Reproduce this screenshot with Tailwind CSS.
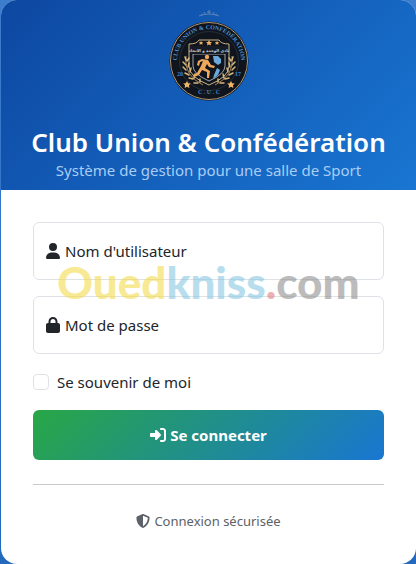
<!DOCTYPE html>
<html lang="fr">
<head>
    <meta charset="UTF-8">
    <meta name="viewport" content="width=device-width, initial-scale=1.0">
    <title>Club Union &amp; Confédération</title>
    <script src="https://cdn.jsdelivr.net/npm/@tailwindcss/browser@4"></script>
</head>
<body class="min-h-screen bg-linear-to-b from-[#3d7dce] to-[#2369bd] pl-px font-['Noto_Sans',sans-serif] text-[#212529]">
    <main class="relative min-h-screen overflow-hidden rounded-2xl bg-white">
        <!-- Header -->
        <header class="flex flex-col items-center bg-[linear-gradient(135deg,#0d47a1,#1976d2)] px-4 pt-2 pb-2.5 text-center text-white">
            <svg class="h-24 w-24" viewBox="0 0 96 96" role="img" aria-label="Logo du club">
                <defs>
                    <path id="arc-top" d="M17 61A32 32 0 1 1 79 61"/>
                </defs>
                <path d="M38 8q10-4 20 0M40 6l2 1M56 6l-2 1M48 2v4M46 4h4M43 4l1 2M53 4l-1 2" fill="none" stroke="#5d83b5" stroke-width="1"/>
                <circle cx="48" cy="53" r="39.500" fill="#10151d"/>
                <circle cx="48" cy="53" r="38.500" fill="none" stroke="#b29670" stroke-width="1"/>
                <circle cx="48" cy="53" r="29.500" fill="none" stroke="#3a4450" stroke-width="0.500"/>
                <text font-family="Liberation Serif, serif" font-size="6" font-weight="700" fill="#4a90d4" text-anchor="middle">
                    <textPath href="#arc-top" startOffset="50%">CLUB UNION &amp; CONFÉDÉRATION</textPath>
                </text>
                <g font-family="Liberation Serif, serif" font-size="6" font-weight="700" fill="#3f86cc" text-anchor="middle">
                    <text x="19" y="68">20</text>
                    <text x="77" y="68">17</text>
                    <text x="48" y="86">C . U . C</text>
                </g>
                <!-- Shield -->
                <path d="M28 36q8 0 10-4h20q2 4 10 4v22q0 11-20 19-20-8-20-19z" fill="#10151d" stroke="#c9b38a" stroke-width="1"/>
                <path d="M32 46h32v12q0 8-16 15-16-7-16-15z" fill="none" stroke="#c3cad2" stroke-width="0.800"/>
                <path d="M29 38h38v8H29z" fill="#161b24"/>
                <text x="48" y="44" font-family="DejaVu Sans, sans-serif" font-size="4" font-weight="700" fill="#c8d3de" text-anchor="middle">نادي الوحدة و الاتحاد</text>
                <g fill="#f0b464">
                    <path d="M48 32l1 2h2l-1.500 1.500.5 2-2-1-2 1 .5-2L45 34h2zM40 33l.7 1.300h1.500l-1 1 .3 1.500-1.500-.8-1.500.8.3-1.500-1-1h1.500zM56 33l.7 1.300h1.500l-1 1 .3 1.500-1.500-.8-1.500.8.3-1.500-1-1h1.500z"/>
                    <path d="M26 73l1.200 2.200 2.600.3-1.900 1.800.5 2.600-2.400-1.200-2.400 1.200.5-2.600-1.900-1.800 2.600-.3zM70 73l1.200 2.200 2.600.3-1.900 1.800.5 2.600-2.400-1.200-2.400 1.200.5-2.600-1.900-1.800 2.600-.3z"/>
                </g>
                <!-- Laurels -->
                <g fill="none" stroke="#d9b67a">
                    <path d="M25 48q-3 19 17 29M71 48q3 19-17 29" stroke-width="0.700"/>
                    <path d="M24 49l1 3M22 54l3 3M22 59l3 3M24 65l4 2M28 70l4 1M33 75l4 0M28 50l-2 3M28 55l-1 4M30 60l-1 4M34 66l-1 4M39 71l0 3M72 49l-1 3M74 54l-3 3M74 59l-3 3M72 65l-4 2M68 70l-4 1M63 75l-4 0M68 50l2 3M68 55l1 4M66 60l1 4M62 66l1 4M57 71l0 3" stroke-width="1.500" stroke-linecap="round"/>
                </g>
                <!-- Runner -->
                <g fill="#f0a95c">
                    <circle cx="46" cy="49" r="2.200"/>
                    <path d="M41 51l6 1 3 5 4 1-1 2-5-1-2-3-2 4 5 3-1 7-2 0 0-6-5-2-3 5-5 2-1-2 4-2 4-7 2-5-3 1-1 4-2-1 1-4z"/>
                </g>
                <path d="M52 48l5 0 3 3 0 4-3 2-4-3zM56 60l3 2-2 5-5 4 1-4z" fill="#6ba8dc"/>
            </svg>
            <h1 class="mt-5 text-[26px] leading-9 font-semibold whitespace-nowrap">Club Union &amp; Confédération</h1>
            <p class="text-[15px] leading-5 text-[#a9cdf4]">Système de gestion pour une salle de Sport</p>
        </header>

        <!-- Login form -->
        <form class="flex flex-col px-8 pt-8">
            <div class="relative">
                <input id="username" type="text" autocomplete="username" class="block h-[58px] w-full rounded-md border border-[#dee2e6] bg-white px-3 focus:outline-none focus:ring-2 focus:ring-blue-500">
                <label for="username" class="pointer-events-none absolute inset-y-0 left-3 flex items-center gap-1 text-[15px]">
                    <svg class="h-4 w-4" viewBox="0 0 448 512" fill="currentColor" aria-hidden="true"><path d="M224 256A128 128 0 1 0 224 0a128 128 0 1 0 0 256zm-45.700 48C79.800 304 0 383.800 0 482.300C0 498.700 13.300 512 29.700 512H418.300c16.400 0 29.700-13.300 29.700-29.700C448 383.800 368.200 304 269.700 304H178.300z"/></svg>
                    Nom d'utilisateur
                </label>
            </div>
            <div class="relative mt-4">
                <input id="password" type="password" autocomplete="current-password" class="block h-[58px] w-full rounded-md border border-[#dee2e6] bg-white px-3 focus:outline-none focus:ring-2 focus:ring-blue-500">
                <label for="password" class="pointer-events-none absolute inset-y-0 left-3 flex items-center gap-1 text-[15px]">
                    <svg class="h-4 w-4" viewBox="0 0 448 512" fill="currentColor" aria-hidden="true"><path d="M144 144v48H304V144c0-44.200-35.800-80-80-80s-80 35.800-80 80zM80 192V144C80 64.500 144.500 0 224 0s144 64.500 144 144v48h16c35.300 0 64 28.700 64 64V448c0 35.300-28.700 64-64 64H64c-35.300 0-64-28.700-64-64V256c0-35.300 28.700-64 64-64H80z"/></svg>
                    Mot de passe
                </label>
            </div>
            <div class="mt-4 flex items-center gap-2">
                <input id="remember" type="checkbox" class="h-4 w-4 appearance-none rounded border border-[#dee2e6] bg-white checked:bg-[#1976d2]">
                <label for="remember" class="text-[15px] leading-6">Se souvenir de moi</label>
            </div>
            <button type="submit" class="mt-4 flex h-[50px] items-center justify-center gap-1 rounded-md bg-[linear-gradient(135deg,#28a745,#1976d2)] text-[15px] font-bold text-white">
                <svg class="h-4 w-4" viewBox="0 0 512 512" fill="currentColor" aria-hidden="true"><path d="M217.900 105.900L340.700 228.700c7.200 7.200 11.300 17.100 11.300 27.300s-4.100 20.100-11.300 27.300L217.900 406.100c-6.400 6.400-15 9.900-24 9.900c-18.700 0-33.900-15.200-33.900-33.900l0-62.100L32 320c-17.700 0-32-14.300-32-32l0-64c0-17.700 14.300-32 32-32l128 0 0-62.100c0-18.700 15.200-33.900 33.900-33.900c9 0 17.600 3.600 24 9.900zM352 416l64 0c17.700 0 32-14.300 32-32l0-256c0-17.700-14.300-32-32-32l-64 0c-17.700 0-32-14.300-32-32s14.300-32 32-32l64 0c53 0 96 43 96 96l0 256c0 53-43 96-96 96l-64 0c-17.700 0-32-14.300-32-32s14.300-32 32-32z"/></svg>
                Se connecter
            </button>
            <hr class="mt-6 border-[#c8c9ca]">
        </form>

        <p class="flex items-center justify-center gap-1 pt-7 pb-8 text-[13px] leading-4 text-[#5c6268]">
            <svg class="h-3.5 w-3.5" viewBox="0 0 512 512" fill="currentColor" aria-hidden="true"><path d="M256 0c4.600 0 9.200 1 13.400 2.900L457.700 82.800c22 9.300 38.400 31 38.300 57.200c-.5 99.200-41.300 280.700-213.600 363.200c-16.700 8-36.100 8-52.800 0C57.300 420.700 16.500 239.200 16 140c-.1-26.200 16.300-47.900 38.300-57.200L242.700 2.900C246.800 1 251.400 0 256 0zm0 66.800V444.800C394 378 431.100 230.100 432 141.400L256 66.800z"/></svg>
            Connexion sécurisée
        </p>

        <!-- Watermark -->
        <div class="pointer-events-none absolute inset-x-0 top-[252px] text-center font-['Lato',sans-serif] text-[44px] leading-[60px] font-black whitespace-nowrap opacity-60" aria-hidden="true"><span class="text-[#f5dc50]">Oued</span><span class="text-[#8ac9e4]">kniss</span><span class="text-[#e08080]">.</span><span class="text-[#909090]">com</span></div>
    </main>
</body>
</html>
